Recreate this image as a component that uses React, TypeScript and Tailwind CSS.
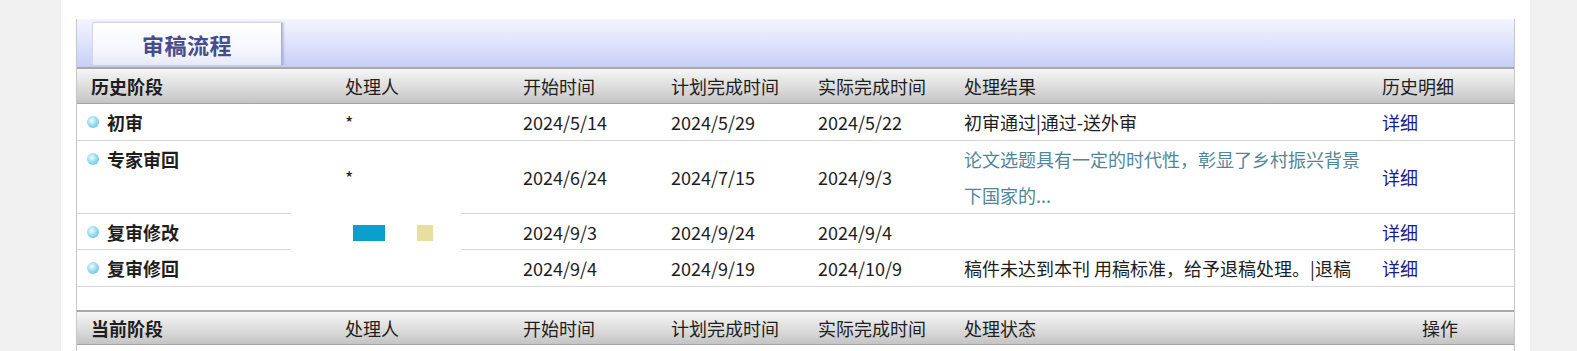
import type { ReactNode } from "react";

const fontStack = "font-['Microsoft_YaHei','Noto_Sans_CJK_SC',sans-serif]";
const cols = "grid grid-cols-[268px_178px_148px_147px_146px_418px_1fr]";
const headBar =
  "border-t-2 border-b border-t-[#a9a9a9] border-b-[#a3a3a3] bg-[linear-gradient(to_bottom,#f6f6f6,#dcdcdc_55%,#c4c4c4)] text-[18px] text-[#1e1e1e]";

type HistoryRow = {
  stage: string;
  handler: string;
  start: string;
  plan: string;
  actual: string;
  result: ReactNode;
  height: string;
};

const history: HistoryRow[] = [
  {
    stage: "初审",
    handler: "*",
    start: "2024/5/14",
    plan: "2024/5/29",
    actual: "2024/5/22",
    result: <span className="text-[#1e1e1e]">初审通过|通过-送外审</span>,
    height: "h-[37px]",
  },
  {
    stage: "专家审回",
    handler: "*",
    start: "2024/6/24",
    plan: "2024/7/15",
    actual: "2024/9/3",
    result: (
      <span className="text-[#4f8798]">论文选题具有一定的时代性，彰显了乡村振兴背景下国家的...</span>
    ),
    height: "h-[73px]",
  },
  {
    stage: "复审修改",
    handler: "",
    start: "2024/9/3",
    plan: "2024/9/24",
    actual: "2024/9/4",
    result: null,
    height: "h-[36px]",
  },
  {
    stage: "复审修回",
    handler: "",
    start: "2024/9/4",
    plan: "2024/9/19",
    actual: "2024/10/9",
    result: <span className="whitespace-nowrap text-[#1e1e1e]">稿件未达到本刊 用稿标准，给予退稿处理。|退稿</span>,
    height: "h-[37px]",
  },
];

function Bullet() {
  return (
    <span className="mt-[12px] h-[12px] w-[12px] shrink-0 rounded-full bg-[radial-gradient(circle_at_40%_38%,#f2fdff,#9adcf2_45%,#52b8de)]" />
  );
}

export default function App() {
  return (
    <div className={`min-h-[351px] bg-[#f0f0f0] ${fontStack}`}>
      <div className="ml-[61px] min-h-[351px] w-[1469px] bg-white px-[15px] pt-[19px]">
        <div className="relative border-x border-[#c6c6c6]">
          {/* tab strip */}
          <div className="h-[48px] bg-[linear-gradient(to_bottom,#f4f5ff,#dfe3fb_50%,#c7cef6)] pl-[15px] pt-[3px]">
            <div className="flex h-[43px] w-[190px] items-center justify-center rounded-t-[2px] border border-b-0 border-[#d3d6ea] border-r-[#a9adcc] bg-[linear-gradient(to_bottom,#ffffff,#f7f8fe_60%,#e6e9f8)] text-[22px] font-bold tracking-[0.5px] text-[#474c8c] shadow-[2px_0_2px_rgba(120,125,170,0.35)]">
              审稿流程
            </div>
          </div>

          {/* history header */}
          <div className={`${cols} ${headBar} h-[37px] items-center`}>
            <div className="pl-[14px] font-bold">历史阶段</div>
            <div>处理人</div>
            <div>开始时间</div>
            <div>计划完成时间</div>
            <div>实际完成时间</div>
            <div>处理结果</div>
            <div>历史明细</div>
          </div>

          {history.map((row) => (
            <div
              key={row.stage}
              className={`${cols} ${row.height} items-center border-b border-[#d6d6d6] text-[18px] leading-[36px] text-[#1e1e1e]`}
            >
              <div className="flex gap-[8px] self-start pl-[10px] font-bold">
                <Bullet />
                <span>{row.stage}</span>
              </div>
              <div>{row.handler}</div>
              <div>{row.start}</div>
              <div>{row.plan}</div>
              <div>{row.actual}</div>
              <div className="overflow-hidden pr-[20px]">{row.result}</div>
              <div className="text-[#1c1c8a]">详细</div>
            </div>
          ))}

          <div className="h-[23px]" />

          {/* current header */}
          <div className={`${cols} ${headBar} h-[35px] items-center border-t`}>
            <div className="pl-[14px] font-bold">当前阶段</div>
            <div>处理人</div>
            <div>开始时间</div>
            <div>计划完成时间</div>
            <div>实际完成时间</div>
            <div>处理状态</div>
            <div className="pl-[40px]">操作</div>
          </div>
          <div className="h-[10px]" />

          {/* floating swatch box over the 复审修改 row */}
          <div className="absolute left-[214px] top-[189px] h-[48px] w-[170px] bg-white">
            <div className="absolute left-[62px] top-[17px] h-[16px] w-[32px] bg-[#0aa0cc]" />
            <div className="absolute left-[126px] top-[17px] h-[16px] w-[16px] bg-[#e8dea0]" />
          </div>
        </div>
      </div>
    </div>
  );
}
